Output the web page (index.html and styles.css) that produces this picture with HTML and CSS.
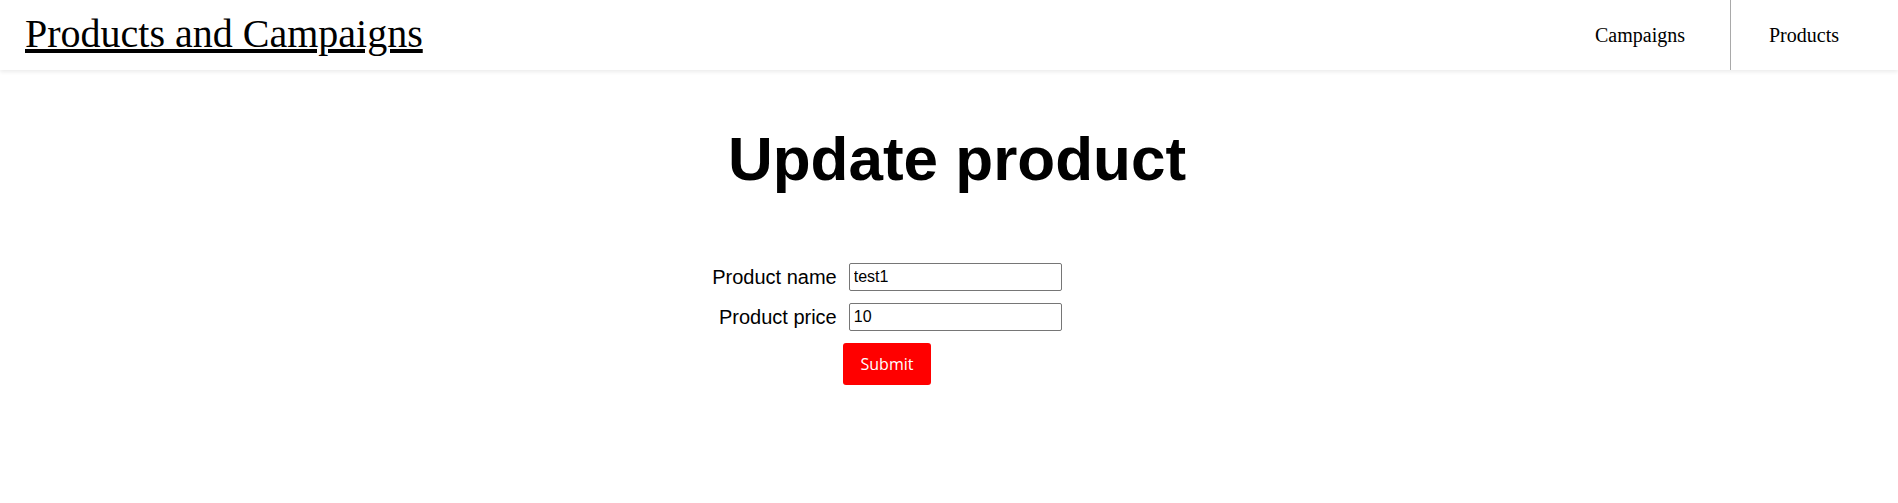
FILE: index.html
```html
<!DOCTYPE html>
<html lang="en">
<head>
<meta charset="utf-8">
<title>Update product</title>
<link rel="stylesheet" href="styles.css">
</head>
<body>
<header class="topbar">
  <a class="brand" href="#">Products and Campaigns</a>
  <nav class="nav">
    <a class="nav-link nav-link-first" href="#">Campaigns</a>
    <a class="nav-link nav-link-divided" href="#">Products</a>
  </nav>
</header>
<main class="main">
  <h1 class="title">Update product</h1>
  <div class="form-wrap">
    <form class="form">
      <label class="label" for="name">Product name</label>
      <input class="input" id="name" type="text" value="test1">
      <label class="label" for="price">Product price</label>
      <input class="input" id="price" type="text" value="10">
      <button class="submit" type="button">Submit</button>
    </form>
  </div>
</main>
</body>
</html>
```
FILE: styles.css
```css
html, body {
  margin: 0;
  padding: 0;
  background: #fff;
}

body {
  font-family: "Liberation Serif", "Times New Roman", serif;
  color: #000;
}

.topbar {
  height: 70px;
  display: flex;
  justify-content: space-between;
  align-items: stretch;
  padding: 0 20px 0 25px;
  box-shadow: 0 2px 4px rgba(0, 0, 0, 0.08);
  position: relative;
}

.brand {
  align-self: center;
  font-size: 40px;
  color: #000;
  text-decoration: underline;
  margin-top: -4px;
}

.nav {
  display: flex;
  align-items: stretch;
  gap: 8px;
}

.nav-link {
  display: flex;
  align-items: center;
  padding: 0 39px;
  font-size: 20px;
  color: #000;
  text-decoration: none;
}

.nav-link-first {
  padding-right: 37px;
}

.nav-link-divided {
  border-left: 1px solid #a9a9a9;
  padding-left: 38px;
}

.main {
  font-family: "Liberation Sans", Arial, sans-serif;
}

.title {
  margin: 53px 0 0;
  padding-left: 16px;
  text-align: center;
  font-size: 62px;
  font-weight: bold;
}

.form-wrap {
  display: flex;
  justify-content: center;
  padding-right: 124px;
  margin-top: 69px;
}

.form {
  display: grid;
  grid-template-columns: auto 213px;
  column-gap: 12px;
  row-gap: 12px;
  align-items: center;
}

.label {
  font-size: 20px;
  text-align: right;
}

.input {
  box-sizing: border-box;
  width: 213px;
  height: 28px;
  margin: 0;
  padding: 0 4px;
  font-family: "Liberation Sans", Arial, sans-serif;
  font-size: 16px;
  color: #000;
  border: 1px solid #767676;
  border-radius: 2px;
  background: #fff;
}

.submit {
  grid-column: 1 / span 2;
  justify-self: center;
  height: 42px;
  padding: 0 18px;
  border: none;
  border-radius: 3px;
  background: #ff0000;
  color: #fff;
  font-family: "Open Sans", sans-serif;
  font-size: 16px;
  cursor: pointer;
}
```
